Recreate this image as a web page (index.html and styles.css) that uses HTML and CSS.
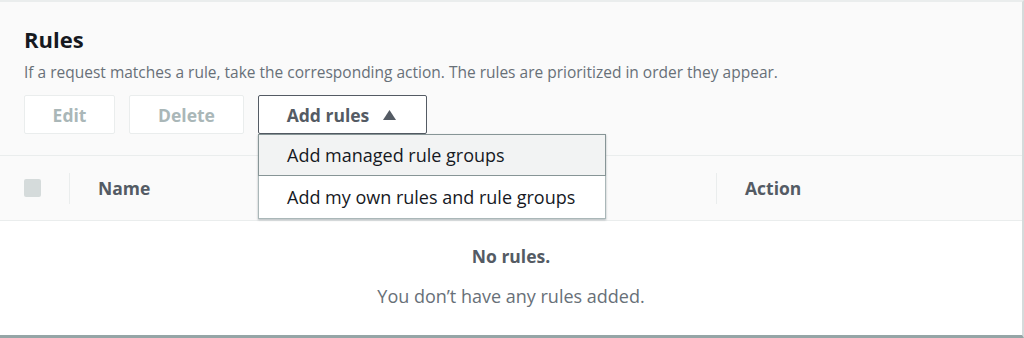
FILE: index.html
```html
<!DOCTYPE html>
<html>
<head>
<meta charset="utf-8">
<link rel="stylesheet" href="styles.css">
</head>
<body>
<div class="panel">
  <div class="header">
    <h2 class="title">Rules</h2>
    <p class="desc">If a request matches a rule, take the corresponding action. The rules are prioritized in order they appear.</p>
    <div class="actions">
      <button class="btn disabled btn-edit">Edit</button>
      <button class="btn disabled btn-delete">Delete</button>
      <div class="dropdown">
        <button class="btn btn-add">Add rules <svg class="caret" width="13" height="10" viewBox="0 0 13 10"><path d="M6.5 0 L13 10 L0 10 Z" fill="#545b64"/></svg></button>
        <div class="menu">
          <div class="item active">Add managed rule groups</div>
          <div class="item">Add my own rules and rule groups</div>
        </div>
      </div>
    </div>
  </div>
  <div class="thead">
    <div class="cell cell-check"><span class="checkbox"></span></div>
    <div class="cell cell-name">Name</div>
    <div class="cell cell-action">Action</div>
  </div>
  <div class="empty">
    <div class="empty-title">No rules.</div>
    <div class="empty-text">You don’t have any rules added.</div>
  </div>
</div>
</body>
</html>
```

FILE: styles.css
```css
* { box-sizing: border-box; }
html, body { margin: 0; padding: 0; background: #ffffff; }
body { font-family: "Open Sans", "Liberation Sans", sans-serif; }

.panel {
  width: 1024px;
  height: 338px;
  border-top: 2px solid #eaeded;
  border-right: 2px solid #d5dbdb;
  border-bottom: 3px solid #95a5a6;
  background: #fafafa;
  display: flex;
  flex-direction: column;
}

.header {
  padding: 24px 24px 20px 24px;
  height: 153px;
}
.title {
  margin: 0;
  font-size: 22px;
  line-height: 26px;
  font-weight: 700;
  color: #16191f;
}
.desc {
  margin: 9px 0 0 0;
  font-size: 15.5px;
  line-height: 22px;
  color: #687078;
}
.actions {
  margin-top: 12px;
  display: flex;
  gap: 14px;
  align-items: flex-start;
}
.btn {
  height: 39px;
  font-family: inherit;
  font-size: 17.5px;
  font-weight: 700;
  background: #ffffff;
  border-radius: 2px;
  padding: 0;
  display: flex;
  align-items: center;
  justify-content: center;
}
.disabled {
  color: #aab7b8;
  border: 1px solid #eaeded;
}
.btn-edit { width: 91px; }
.btn-delete { width: 115px; }
.dropdown { position: relative; }
.btn-add {
  width: 169px;
  color: #545b64;
  border: 1px solid #545b64;
  gap: 14px;
  padding-right: 2px;
}
.caret { margin-top: 1px; }

.menu {
  position: absolute;
  top: 39px;
  left: 0;
  width: 348px;
  background: #ffffff;
  border: 1px solid #aab7b8;
  border-top: none;
  box-shadow: 0 1px 2px rgba(0,28,36,0.3);
  z-index: 2;
}
.item {
  height: 42px;
  padding-left: 28px;
  display: flex;
  align-items: center;
  font-size: 18px;
  color: #16191f;
}
.item.active {
  background: #f2f3f3;
  border: 1px solid #879596;
  margin: 0 -1px;
  padding-left: 28px;
}

.thead {
  height: 66px;
  border-top: 1px solid #eaeded;
  border-bottom: 1px solid #eaeded;
  display: flex;
  align-items: center;
  background: #fafafa;
}
.cell {
  font-size: 17.5px;
  font-weight: 700;
  color: #545b64;
}
.cell-check {
  width: 69px;
  padding-left: 24px;
  display: flex;
  align-items: center;
}
.checkbox {
  width: 17px;
  height: 18px;
  background: #d5dbdb;
  border-radius: 2px;
}
.cell-name {
  width: 647px;
  padding-left: 28px;
  border-left: 1px solid #eaeded;
  height: 31px;
  line-height: 31px;
}
.cell-action {
  padding-left: 28px;
  border-left: 1px solid #eaeded;
  height: 31px;
  line-height: 31px;
}

.empty {
  flex: 1;
  background: #ffffff;
  text-align: center;
  padding-top: 23px;
}
.empty-title {
  font-size: 17.5px;
  font-weight: 700;
  color: #545b64;
  line-height: 24px;
}
.empty-text {
  margin-top: 16px;
  font-size: 18px;
  color: #687078;
  line-height: 24px;
}
```
